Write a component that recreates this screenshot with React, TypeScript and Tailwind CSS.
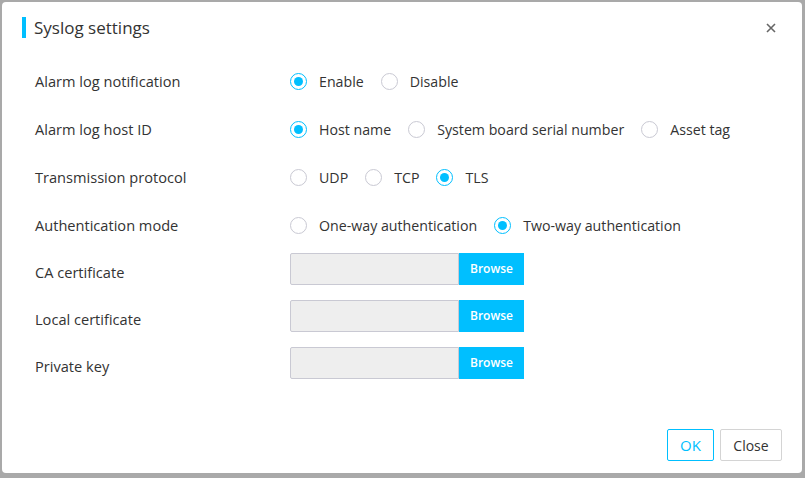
import { useState } from "react";

type Opt = { label: string };

const Radio = ({ checked, label, onClick }: { checked: boolean; label: string; onClick: () => void }) => (
  <label onClick={onClick} className="flex items-center mr-[17px] cursor-pointer">
    <span
      className={
        checked
          ? "w-[17px] h-[17px] rounded-full border border-[#00bfff] flex items-center justify-center"
          : "w-[17px] h-[17px] rounded-full border border-[#c9c9d3]"
      }
    >
      {checked && <span className="w-[9px] h-[9px] rounded-full bg-[#00bfff]" />}
    </span>
    <span className="ml-[12px] text-[14.2px] text-[#333]">{label}</span>
  </label>
);

const RadioRow = ({ title, options, init }: { title: string; options: Opt[]; init: number }) => {
  const [sel, setSel] = useState(init);
  return (
    <div className="flex items-center h-[48px] pt-[1px]">
      <div className="w-[255px] text-[14.6px] text-[#333]">{title}</div>
      <div className="flex items-center">
        {options.map((o, i) => (
          <Radio key={o.label} label={o.label} checked={sel === i} onClick={() => setSel(i)} />
        ))}
      </div>
    </div>
  );
};

const FileRow = ({ title }: { title: string }) => (
  <div className="flex items-center h-[47px]">
    <div className="w-[255px] pt-[8px] text-[14.6px] text-[#333]">{title}</div>
    <div className="flex h-[32px]">
      <div className="w-[169px] bg-[#eeeeee] border border-[#c9c9d3] rounded-l-[2px]" />
      <button className="w-[65px] bg-[#00bfff] text-white text-[12px] font-semibold">Browse</button>
    </div>
  </div>
);

export default function App() {
  return (
    <div className="w-[805px] h-[478px] bg-[#a9a9a9] pt-[2px] pl-[2px] font-['Open_Sans',sans-serif]">
      <div className="w-[800px] h-[471px] bg-white rounded-[4px] flex flex-col">
        {/* header */}
        <div className="h-[55px] flex items-center pl-[20px] pr-[26px] pb-[4px]">
          <div className="w-[4px] h-[21px] bg-[#00bfff]" />
          <div className="ml-[8px] text-[17px] text-[#333] flex-1">Syslog settings</div>
          <svg width="10" height="10" viewBox="0 0 10 10" className="text-[#666]">
            <path d="M1 1L9 9M9 1L1 9" stroke="currentColor" strokeWidth="1.6" />
          </svg>
        </div>

        <div className="flex flex-col pl-[33px]">
          <RadioRow title="Alarm log notification" options={[{ label: "Enable" }, { label: "Disable" }]} init={0} />
          <RadioRow
            title="Alarm log host ID"
            options={[{ label: "Host name" }, { label: "System board serial number" }, { label: "Asset tag" }]}
            init={0}
          />
          <RadioRow title="Transmission protocol" options={[{ label: "UDP" }, { label: "TCP" }, { label: "TLS" }]} init={2} />
          <RadioRow
            title="Authentication mode"
            options={[{ label: "One-way authentication" }, { label: "Two-way authentication" }]}
            init={1}
          />
          <div className="flex flex-col -mt-[4px]">
            <FileRow title="CA certificate" />
            <FileRow title="Local certificate" />
            <FileRow title="Private key" />
          </div>
        </div>

        <div className="flex-1" />
        <div className="flex justify-end gap-[6px] pr-[20px] pb-[12px]">
          <button className="w-[47px] h-[32px] border border-[#00bfff] rounded-[2px] text-[#00bfff] text-[15px]">OK</button>
          <button className="w-[62px] h-[32px] border border-[#d4d4d4] rounded-[2px] text-[#333] text-[14px]">Close</button>
        </div>
      </div>
    </div>
  );
}
